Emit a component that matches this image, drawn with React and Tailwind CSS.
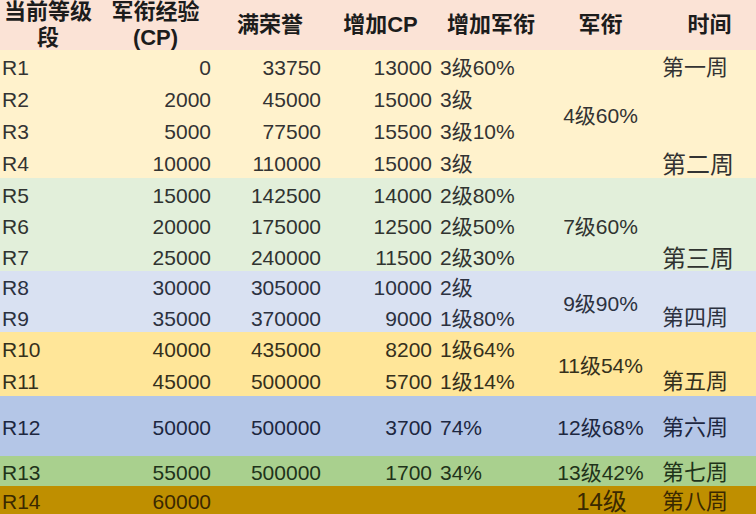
import React from "react";

// 军衔等级表
const bands = [
  {
    bg: "bg-[#fff2cc]",
    ink: "text-[#333333]",
    rank: "4级60%",
    rows: [
      ["R1", "0", "33750", "13000", "3级60%", "第一周"],
      ["R2", "2000", "45000", "15000", "3级", ""],
      ["R3", "5000", "77500", "15500", "3级10%", ""],
      ["R4", "10000", "110000", "15000", "3级", "第二周", true],
    ],
  },
  {
    bg: "bg-[#e2efda]",
    ink: "text-[#303330]",
    rank: "7级60%",
    rows: [
      ["R5", "15000", "142500", "14000", "2级80%", ""],
      ["R6", "20000", "175000", "12500", "2级50%", ""],
      ["R7", "25000", "240000", "11500", "2级30%", "第三周", true],
    ],
  },
  {
    bg: "bg-[#d9e1f2]",
    ink: "text-[#2c3140]",
    rank: "9级90%",
    rows: [
      ["R8", "30000", "305000", "10000", "2级", ""],
      ["R9", "35000", "370000", "9000", "1级80%", "第四周"],
    ],
  },
  {
    bg: "bg-[#ffe699]",
    ink: "text-[#35301c]",
    rank: "11级54%",
    rows: [
      ["R10", "40000", "435000", "8200", "1级64%", ""],
      ["R11", "45000", "500000", "5700", "1级14%", "第五周"],
    ],
  },
  {
    bg: "bg-[#b4c6e7]",
    ink: "text-[#1d2740]",
    rank: "12级68%",
    rows: [["R12", "50000", "500000", "3700", "74%", "第六周"]],
  },
  {
    bg: "bg-[#a9d08e]",
    ink: "text-[#1f331a]",
    rank: "13级42%",
    rows: [["R13", "55000", "500000", "1700", "34%", "第七周"]],
  },
  {
    bg: "bg-[#bf8f00]",
    ink: "text-[#3a2800]",
    rank: "14级",
    big: true,
    rows: [["R14", "60000", "", "", "", "第八周"]],
  },
];

const spans = { 1: "row-span-1", 2: "row-span-2", 3: "row-span-3", 4: "row-span-4" };

function Head({ children }) {
  return (
    <div className="bg-[#fbe3d6] flex items-center justify-center text-center text-[22px] leading-[26px] font-bold text-[#1c1c1c]">
      {children}
    </div>
  );
}

export default function App() {
  return (
    <div className="w-[756px] h-[514px] overflow-hidden font-['Liberation_Sans','Noto_Sans_CJK_SC',sans-serif]">
      <div className="grid grid-cols-[96px_119px_110px_111px_110px_109px_101px] grid-rows-[50px_32px_32px_32px_32px_31px_31px_31px_30px_31px_32px_32px_60px_30px_28px]">
        <Head>
          当前等级
          <br />段
        </Head>
        <Head>
          军衔经验
          <br />
          (CP)
        </Head>
        <Head>满荣誉</Head>
        <Head>增加CP</Head>
        <Head>增加军衔</Head>
        <Head>军衔</Head>
        <Head>
          <span className="pl-[8px]">时间</span>
        </Head>

        {bands.map((band) =>
          band.rows.map((r, i) => {
            const cell = `${band.bg} ${band.ink} flex items-center pt-[3px] text-[21px] leading-none whitespace-nowrap`;
            return (
              <React.Fragment key={r[0]}>
                <div className={`${cell} pl-[2px]`}>{r[0]}</div>
                <div className={`${cell} justify-end pr-[4px]`}>{r[1]}</div>
                <div className={`${cell} justify-end pr-[4px]`}>{r[2]}</div>
                <div className={`${cell} justify-end pr-[4px]`}>{r[3]}</div>
                <div className={`${cell} pl-[4px]`}>{r[4]}</div>
                {i === 0 && (
                  <div
                    className={`${cell} ${spans[band.rows.length]} justify-center ${
                      band.big ? "text-[24px] pl-[2px]" : ""
                    }`}
                  >
                    {band.rank}
                  </div>
                )}
                <div className={`${cell} pl-[7px] ${r[6] ? "text-[24px] pt-[6px]" : "text-[22px]"}`}>
                  {r[5]}
                </div>
              </React.Fragment>
            );
          })
        )}
      </div>
    </div>
  );
}
